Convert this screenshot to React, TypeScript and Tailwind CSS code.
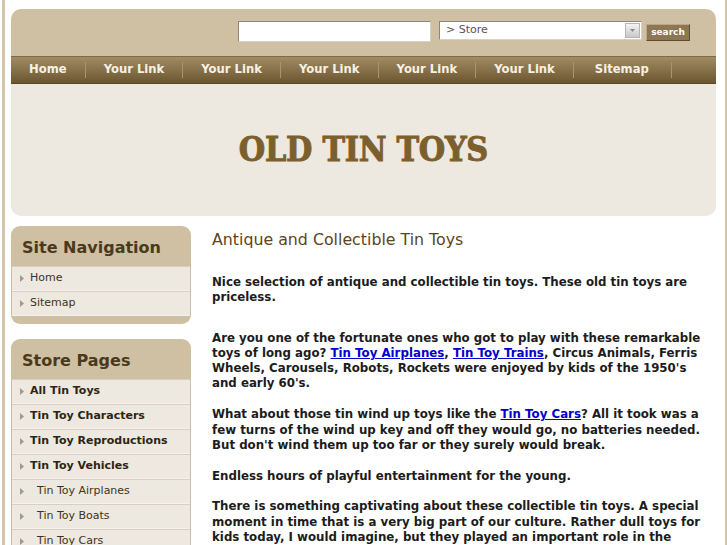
import { ReactNode } from 'react'

const navItems = ['Home', 'Your Link', 'Your Link', 'Your Link', 'Your Link', 'Your Link', 'Sitemap']

const storePages = [
  { label: 'All Tin Toys', sub: false },
  { label: 'Tin Toy Characters', sub: false },
  { label: 'Tin Toy Reproductions', sub: false },
  { label: 'Tin Toy Vehicles', sub: false },
  { label: 'Tin Toy Airplanes', sub: true },
  { label: 'Tin Toy Boats', sub: true },
  { label: 'Tin Toy Cars', sub: true },
  { label: 'Tin Toy Trains', sub: true },
]

function Arrow() {
  return (
    <svg width="4" height="7" viewBox="0 0 4 7" className="shrink-0">
      <path d="M0 0 L4 3.5 L0 7 Z" fill="#a39a8c" />
    </svg>
  )
}

function SideBox({ title, children }: { title: string; children: ReactNode }) {
  return (
    <div className="rounded-[9px] bg-[#cfbfa3] overflow-hidden pb-[8px]">
      <div className="h-[40px] px-[11px] pt-[3px] flex items-center text-[16px] font-bold text-[#4a3a1c]">
        {title}
      </div>
      <ul className="bg-[#ede8e0] border-x border-[#cbbfa9]">
        {children}
      </ul>
    </div>
  )
}

function SideItem({ label, bold, sub }: { label: string; bold?: boolean; sub?: boolean }) {
  return (
    <li className="h-[25px] border-t border-[#d7cfc2] border-b border-b-[#f5f2ec] flex items-center pl-[8px] gap-[6px] text-[11px]">
      <Arrow />
      <span className={`${sub ? 'pl-[7px]' : ''} ${bold ? 'font-bold text-[#2e2414]' : 'text-[#3e3322]'}`}>{label}</span>
    </li>
  )
}

function A({ children }: { children: ReactNode }) {
  return <a href="#" className="text-[#0000cc] underline">{children}</a>
}

export default function App() {
  return (
    <div
      className="h-[545px] overflow-hidden bg-white"
      style={{ fontFamily: '"DejaVu Sans", Verdana, sans-serif' }}
    >
      <div className="h-full ml-[2px] border-l-[3px] border-r-[2px] border-[#d3c5aa] flex">
        <div className="flex-1 pl-[6px] pr-[8px] pt-[9px]">
          <div className="w-[705px]">
            {/* top search bar */}
            <div className="h-[47px] rounded-t-[10px] bg-[#cfbfa3] flex items-start pt-[12px] pl-[227px]">
              <input className="w-[193px] h-[21px] bg-white border border-[#8d8678] border-b-[#d8d2c6] border-r-[#d8d2c6]" />
              <div className="ml-[8px] w-[203px] h-[19px] bg-white border border-[#8d8678] border-b-[#d8d2c6] border-r-[#d8d2c6] flex items-center justify-between">
                <span className="pl-[6px] text-[11px] text-[#555]">&gt; Store</span>
                <span className="w-[15px] h-[15px] mr-[1px] bg-gradient-to-b from-[#f4f4f4] to-[#c9c9c9] border border-[#b5b5b5] flex items-center justify-center">
                  <svg width="5" height="3" viewBox="0 0 5 3"><path d="M0 0 L5 0 L2.5 3 Z" fill="#888" /></svg>
                </span>
              </div>
              <button className="ml-[4px] mt-[3px] w-[44px] h-[17px] bg-[#8c7653] border border-[#b8a98c] border-b-[#5e4d30] border-r-[#5e4d30] text-white text-[9px] font-bold leading-none">
                search
              </button>
            </div>
            {/* nav */}
            <nav className="h-[28px] bg-gradient-to-b from-[#a08b65] via-[#87714a] to-[#6a5630] border-t border-[#7d6a48] border-b border-b-[#5a4826] flex items-center">
              {navItems.map((n, i) => (
                <div key={i} className="flex items-center">
                  <span className={`${i === 6 ? 'pl-[21px] pr-[22px]' : 'px-[18px]'} text-[11.6px] font-bold text-[#f7f1e4]`}>{n}</span>
                  <span className="w-px h-[16px] bg-[#5b4a2b] border-r border-[#a8946f]" />
                </div>
              ))}
            </nav>
            {/* banner */}
            <div className="h-[132px] rounded-b-[10px] bg-[#ede8e0] flex items-center justify-center">
              <h1
                className="text-[33px] font-bold text-[#7b5f2d] tracking-[-0.3px] scale-x-[0.92] [-webkit-text-stroke:1px_#7b5f2d]"
                style={{ fontFamily: '"DejaVu Serif", "Liberation Serif", serif' }}
              >
                OLD TIN TOYS
              </h1>
            </div>

            <div className="flex gap-[21px] pt-[10px]">
              {/* sidebar */}
              <aside className="w-[180px] shrink-0 flex flex-col gap-[15px]">
                <SideBox title="Site Navigation">
                  <SideItem label="Home" />
                  <SideItem label="Sitemap" />
                </SideBox>
                <SideBox title="Store Pages">
                  {storePages.map((p) => (
                    <SideItem key={p.label} label={p.label} bold={!p.sub} sub={p.sub} />
                  ))}
                </SideBox>
              </aside>

              {/* content */}
              <main className="w-[492px] text-[11.8px] leading-[15.3px] font-bold text-[#1c1c1c]">
                <h2 className="pt-[4px] text-[15.8px] leading-[19px] font-normal text-[#5a4520]">
                  Antique and Collectible Tin Toys
                </h2>
                <p className="mt-[26px]">
                  Nice selection of antique and collectible tin toys. These old tin toys are priceless.
                </p>
                <p className="mt-[25px]">
                  Are you one of the fortunate ones who got to play with these remarkable toys of long ago?{' '}
                  <A>Tin Toy Airplanes</A>, <A>Tin Toy Trains</A>, Circus Animals, Ferris Wheels, Carousels, Robots,
                  Rockets were enjoyed by kids of the 1950's and early 60's.
                </p>
                <p className="mt-[15.5px]">
                  What about those tin wind up toys like the <A>Tin Toy Cars</A>? All it took was a few turns of the
                  wind up key and off they would go, no batteries needed. But don't wind them up too far or they surely
                  would break.
                </p>
                <p className="mt-[15.5px]">Endless hours of playful entertainment for the young.</p>
                <p className="mt-[15.5px]">
                  There is something captivating about these collectible tin toys. A special moment in time that is a
                  very big part of our culture. Rather dull toys for kids today, I would imagine, but they played an
                  important role in the lives of many children.
                </p>
              </main>
            </div>
          </div>
        </div>
      </div>
    </div>
  )
}
